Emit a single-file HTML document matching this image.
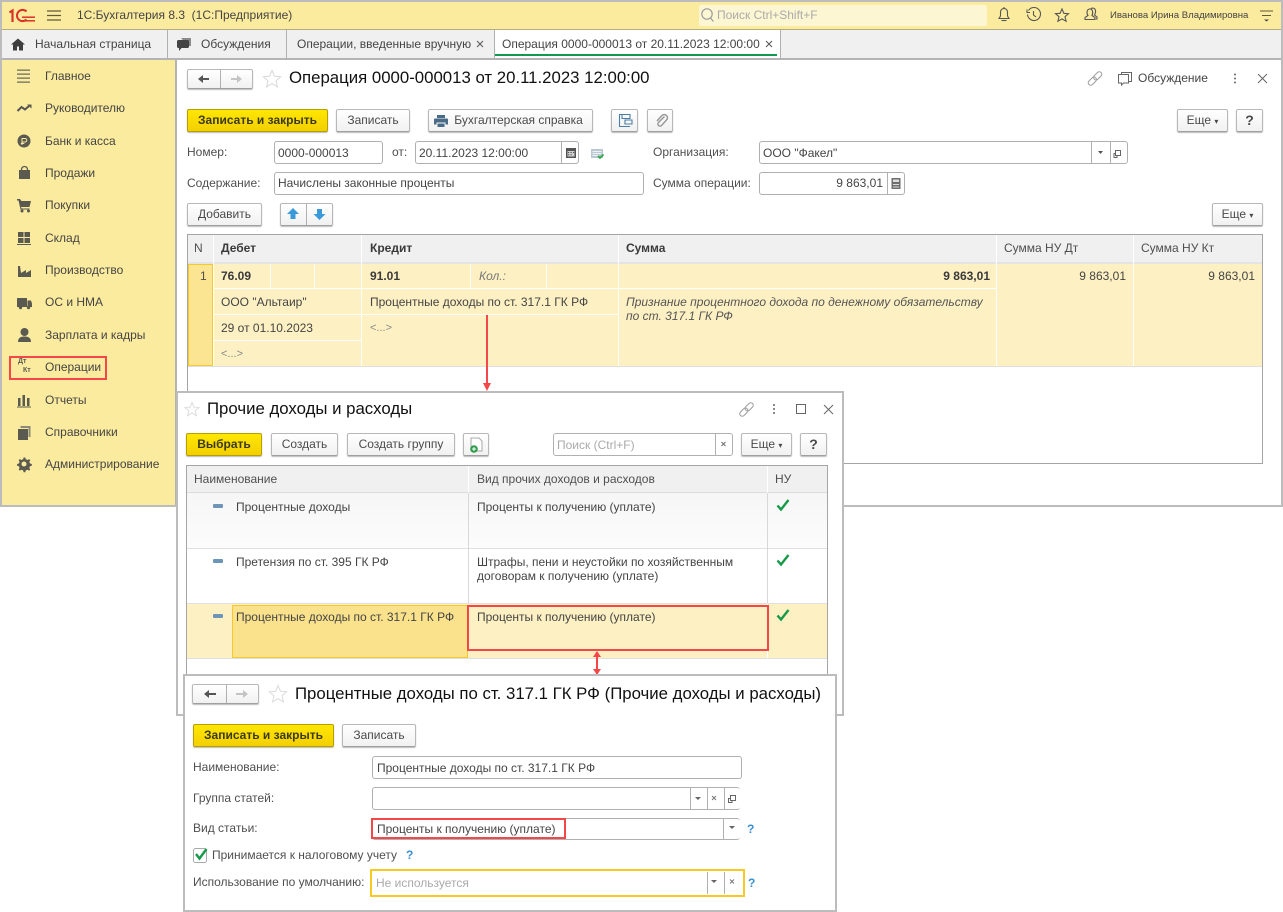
<!DOCTYPE html>
<html lang="ru"><head><meta charset="utf-8"><title>Операция</title>
<style>
html,body{margin:0;padding:0;background:#fff}
#p{position:relative;width:1283px;height:912px;overflow:hidden;background:#fff;font:12px/14px "Liberation Sans","Noto Sans CJK SC",sans-serif;color:#444}
#p div,#p span,#p svg{position:absolute;box-sizing:border-box}
#p span.s{position:static;font-size:8px}
.t{white-space:nowrap}
.l{color:#4f4f4f}
.r{text-align:right}
.h{font-size:16.8px;line-height:20px;color:#111;white-space:nowrap}
.b{border:1px solid #b8b8b8;border-bottom-color:#a0a0a0;border-radius:2px;background:linear-gradient(#fff,#f1f1f1);box-shadow:0 1px 1px #bbb;text-align:center;line-height:21px;color:#4a4a4a;white-space:nowrap}
.y{border:1px solid #b5a000;background:linear-gradient(#ffe700,#f3cf00);color:#3a3a1a;box-shadow:0 1px 1px #bbb;border-radius:2px;text-align:center;line-height:21px;white-space:nowrap;font-weight:bold}
.i{border:1px solid #b0b0b0;border-radius:3px;background:#fff}
.v{background:#b0b0b0;width:1px}
.w{background:#fff}
.bx{border:2px solid #bcbcbc;background:#fff}
.b2{font-weight:bold;color:#3a3a3a}
.it{font-style:italic;color:#555}
svg{overflow:visible}
</style></head><body><div id="p">

<!-- MAIN WINDOW -->
<div style="left:0;top:0;width:1283px;height:507px;border:2px solid #bcbcbc;background:#fff"></div>
<div style="left:2px;top:2px;width:1279px;height:27px;background:#fbeb9e"></div>
<div style="left:2px;top:29px;width:1279px;height:1px;background:#b5ad7e"></div>
<div style="left:2px;top:30px;width:1279px;height:28px;background:#f0f0f0"></div>
<div style="left:2px;top:58px;width:1279px;height:2px;background:#b4b4b4"></div>
<div style="left:494px;top:30px;width:286px;height:28px;background:#fff"></div>
<div style="left:495px;top:54px;width:282px;height:2px;background:#0f9a4f"></div>
<div class="v" style="left:167px;top:30px;height:28px"></div>
<div class="v" style="left:286px;top:30px;height:28px"></div>
<div class="v" style="left:494px;top:30px;height:28px"></div>
<div class="v" style="left:780px;top:30px;height:28px"></div>
<div style="left:2px;top:60px;width:173px;height:445px;background:#fbeb9e"></div>
<div style="left:175px;top:60px;width:2px;height:445px;background:#b4b4b4"></div>

<div style="left:699px;top:5px;width:288px;height:21px;background:#fdf6d2;border-radius:2px"></div>
<span class="t" style="left:77px;top:8px;color:#444;font-size:12px">1С:Бухгалтерия 8.3&nbsp; (1С:Предприятие)</span>
<span class="t" style="left:717px;top:8px;color:#aaa">Поиск Ctrl+Shift+F</span>
<span class="t" style="left:1110px;top:9px;font-size:9.6px;color:#444">Иванова Ирина Владимировна</span>

<span class="t" style="left:35px;top:37px">Начальная страница</span>
<span class="t" style="left:201px;top:37px">Обсуждения</span>
<span class="t" style="left:297px;top:37px">Операции, введенные вручную</span>
<span class="t" style="left:502px;top:37px">Операция 0000-000013 от 20.11.2023 12:00:00</span>

<!-- sidebar text -->
<span class="t" style="left:45px;top:69px">Главное</span>
<span class="t" style="left:45px;top:101px">Руководителю</span>
<span class="t" style="left:45px;top:134px">Банк и касса</span>
<span class="t" style="left:45px;top:166px">Продажи</span>
<span class="t" style="left:45px;top:198px">Покупки</span>
<span class="t" style="left:45px;top:231px">Склад</span>
<span class="t" style="left:45px;top:263px">Производство</span>
<span class="t" style="left:45px;top:295px">ОС и НМА</span>
<span class="t" style="left:45px;top:328px">Зарплата и кадры</span>
<span class="t" style="left:45px;top:360px">Операции</span>
<span class="t" style="left:45px;top:393px">Отчеты</span>
<span class="t" style="left:45px;top:425px">Справочники</span>
<span class="t" style="left:45px;top:457px">Администрирование</span>
<span class="t" style="left:18px;top:358px;font-size:7px;line-height:8px;font-weight:bold;color:#5a5a50">Дт</span>
<span class="t" style="left:23px;top:367px;font-size:7px;line-height:8px;font-weight:bold;color:#5a5a50">Кт</span>
<div style="left:9px;top:356px;width:98px;height:24px;border:2px solid #f4474a"></div>

<!-- form -->
<div class="b" style="left:187px;top:69px;width:66px;height:20px"></div>
<div class="v" style="left:220px;top:70px;height:18px"></div>
<span class="h" style="left:289px;top:68px">Операция 0000-000013 от 20.11.2023 12:00:00</span>
<span class="t" style="left:1138px;top:71px">Обсуждение</span>

<div class="y" style="left:187px;top:109px;width:141px;height:23px">Записать и закрыть</div>
<div class="b" style="left:336px;top:109px;width:74px;height:23px">Записать</div>
<div class="b" style="left:428px;top:109px;width:165px;height:23px;padding-left:16px">Бухгалтерская справка</div>
<div class="b" style="left:611px;top:109px;width:27px;height:23px"></div>
<div class="b" style="left:647px;top:109px;width:26px;height:23px"></div>
<div class="b" style="left:1177px;top:109px;width:51px;height:23px">Еще&nbsp;<span class="s">▾</span></div>
<div class="b" style="left:1236px;top:109px;width:27px;height:23px;font-weight:bold;font-size:14px">?</div>

<span class="t l" style="left:187px;top:145px">Номер:</span>
<div class="i" style="left:274px;top:141px;width:109px;height:23px"></div>
<span class="t" style="left:278px;top:146px">0000-000013</span>
<span class="t l" style="left:392px;top:145px">от:</span>
<div class="i" style="left:415px;top:141px;width:164px;height:23px"></div>
<div class="v" style="left:561px;top:141px;height:23px"></div>
<span class="t" style="left:419px;top:146px">20.11.2023 12:00:00</span>
<span class="t l" style="left:653px;top:145px">Организация:</span>
<div class="i" style="left:759px;top:141px;width:369px;height:23px"></div>
<div class="v" style="left:1091px;top:141px;height:23px"></div>
<div class="v" style="left:1110px;top:141px;height:23px"></div>
<span class="t" style="left:763px;top:146px">ООО "Факел"</span>

<span class="t l" style="left:187px;top:176px">Содержание:</span>
<div class="i" style="left:274px;top:172px;width:370px;height:23px"></div>
<span class="t" style="left:278px;top:176px">Начислены законные проценты</span>
<span class="t l" style="left:653px;top:176px">Сумма операции:</span>
<div class="i" style="left:759px;top:172px;width:146px;height:23px"></div>
<div class="v" style="left:887px;top:172px;height:23px"></div>
<span class="t r" style="left:783px;width:100px;top:176px">9 863,01</span>

<div class="b" style="left:187px;top:203px;width:75px;height:23px">Добавить</div>
<div class="b" style="left:280px;top:203px;width:53px;height:23px"></div>
<div class="v" style="left:306px;top:204px;height:21px"></div>
<div class="b" style="left:1212px;top:203px;width:51px;height:23px">Еще&nbsp;<span class="s">▾</span></div>

<!-- main table -->
<div style="left:187px;top:234px;width:1076px;height:230px;border:1px solid #a5a5a5;background:#fff"></div>
<div style="left:188px;top:235px;width:1074px;height:27px;background:#f0f0f0"></div>
<div style="left:188px;top:262px;width:1074px;height:2px;background:#e4e4e4"></div>
<div style="left:188px;top:264px;width:1074px;height:102px;background:#fdf0c3"></div>
<div style="left:188px;top:366px;width:1074px;height:1px;background:#e0e0e0"></div>
<div style="left:188px;top:264px;width:25px;height:102px;background:#fbe592;border:1px solid #f5c92e"></div>
<div class="w" style="left:213px;top:235px;width:1px;height:131px"></div>
<div class="w" style="left:361px;top:235px;width:1px;height:131px"></div>
<div class="w" style="left:618px;top:235px;width:1px;height:131px"></div>
<div class="w" style="left:996px;top:235px;width:1px;height:131px"></div>
<div class="w" style="left:1133px;top:235px;width:1px;height:131px"></div>
<div class="w" style="left:214px;top:288px;width:404px;height:1px"></div>
<div class="w" style="left:214px;top:314px;width:147px;height:1px"></div>
<div class="w" style="left:214px;top:340px;width:147px;height:1px"></div>
<div class="w" style="left:362px;top:314px;width:256px;height:1px"></div>
<div class="w" style="left:619px;top:288px;width:377px;height:1px"></div>
<div class="w" style="left:270px;top:264px;width:1px;height:24px"></div>
<div class="w" style="left:314px;top:264px;width:1px;height:24px"></div>
<div class="w" style="left:470px;top:264px;width:1px;height:24px"></div>
<div class="w" style="left:546px;top:264px;width:1px;height:24px"></div>

<span class="t l" style="left:194px;top:241px">N</span>
<span class="t b2" style="left:221px;top:241px">Дебет</span>
<span class="t b2" style="left:370px;top:241px">Кредит</span>
<span class="t b2" style="left:626px;top:241px">Сумма</span>
<span class="t l" style="left:1004px;top:241px">Сумма НУ Дт</span>
<span class="t l" style="left:1141px;top:241px">Сумма НУ Кт</span>

<span class="t l" style="left:200px;top:269px">1</span>
<span class="t b2" style="left:221px;top:269px">76.09</span>
<span class="t b2" style="left:370px;top:269px">91.01</span>
<span class="t it" style="left:479px;top:269px;color:#777">Кол.:</span>
<span class="t b2 r" style="left:840px;width:150px;top:269px">9 863,01</span>
<span class="t r" style="left:976px;width:150px;top:269px">9 863,01</span>
<span class="t r" style="left:1105px;width:150px;top:269px">9 863,01</span>
<span class="t" style="left:221px;top:295px">ООО "Альтаир"</span>
<span class="t" style="left:370px;top:295px">Процентные доходы по ст. 317.1 ГК РФ</span>
<span class="t" style="left:221px;top:321px">29 от 01.10.2023</span>
<span class="t" style="left:370px;top:321px;color:#888;font-size:11px">&lt;...&gt;</span>
<span class="t" style="left:221px;top:347px;color:#888;font-size:11px">&lt;...&gt;</span>
<span class="t it" style="left:626px;top:295px">Признание процентного дохода по денежному обязательству</span>
<span class="t it" style="left:626px;top:309px">по ст. 317.1 ГК РФ</span>

<!-- MAIN ICONS -->
<svg style="left:0;top:0" width="1283" height="507" viewBox="0 0 1283 507">
 <!-- logo -->
 <g fill="none" stroke="#d8312a">
  <path d="M9.500 12.500l3-2v11.500" stroke-width="2.200"/>
  <path d="M26.500 11.500a5.600 5.600 0 1 0 0 8" stroke-width="2"/>
  <path d="M22 17.200h13" stroke-width="1.500"/><path d="M22 20.800h13" stroke-width="1.500"/>
 </g>
 <path d="M47 11h14M47 15.500h14M47 20h14" stroke="#5f5a3c" stroke-width="1.200"/>
 <!-- search -->
 <circle cx="707" cy="14" r="5.200" fill="none" stroke="#9c9c9c" stroke-width="1.200"/><path d="M710.500 18l3 3.500" stroke="#9c9c9c" stroke-width="1.200"/>
 <g fill="none" stroke="#555" stroke-width="1.100">
  <!-- bell -->
  <path d="M999 18.500h10l-1.500-2.500v-4a3.500 3.500 0 0 0-7 0v4z"/><path d="M1001.500 20.500h5"/><path d="M1004 7v1.500"/>
  <!-- history -->
  <path d="M1028.500 10.500a6.500 6.500 0 1 1-1 4"/><path d="M1027 9.500v3h3"/><path d="M1033.500 11v4l2.500 2"/>
  <!-- star -->
  <path d="M1062 9l1.900 4.300 4.600.4-3.500 3 1.100 4.600-4.100-2.400-4.100 2.400 1.100-4.600-3.500-3 4.600-.4z"/>
  <!-- users -->
  <path d="M1087 19.500h-2v-2l3-2c-1.500-2-1.500-6 1.500-6.500s4 3.500 2.500 6.500l3 2v2z"/><path d="M1091 8.500c3-1.500 5 1 4.500 3.500s-1 3-1 3l2.500 2v2h-1"/>
 </g>
 <path d="M1260 11h13M1262 15.500h9" stroke="#5f5a3c" stroke-width="1.100"/><path d="M1264 19.500h5l-2.500 2z" fill="#444"/>

 <!-- home, chat -->
 <path d="M18 38.500l-7 6h2v6h4v-4h2v4h4v-6h2z" fill="#3e3e3e"/>
 <path d="M181 38h10v8h-3z" fill="#8a8a8a"/>
 <path d="M178.500 40h9a1.500 1.500 0 0 1 1.500 1.500v5a1.500 1.500 0 0 1-1.500 1.500h-6l-2.500 3v-3h-.5a1.500 1.500 0 0 1-1.500-1.500v-5a1.500 1.500 0 0 1 1.500-1.500z" fill="#444"/>
 <path d="M477 41l6 6M483 41l-6 6M766 41l6 6M772 41l-6 6" stroke="#555" stroke-width="1"/>

 <!-- sidebar icons -->
 <g fill="#5a5a50">
  <path d="M17 70h13v1.200H17zM17 74h13v1.200H17zM17 78h13v1.200H17zM17 82h13v1.200H17z" fill="#6a6a5c" transform="translate(0,-.5)"/>
  <path d="M17.500 111l4-4 3.500 2.500 4-3.500" fill="none" stroke="#555" stroke-width="2"/><path d="M27 104.500h4.500v4z"/>
  <circle cx="24" cy="141" r="6.500"/>
  <path d="M19 170h11v9H19z"/><path d="M21.500 171v-1.500a3 3 0 0 1 6 0v1.500" fill="none" stroke="#5a5a50" stroke-width="1.300"/>
  <path d="M17 199h3l1.500 2H31l-1.500 6H21l.5 1.500h8v1H20.500L18.500 200.500H17z"/><circle cx="22" cy="211" r="1.500"/><circle cx="28.500" cy="211" r="1.500"/>
  <path d="M18 232h5.500v5H18zM24.500 232H30v5h-5.500zM18 238h5.500v5H18zM24.500 238H30v5h-5.500zM17 244h14v1H17z"/>
  <path d="M18 277h13v-7l-5 3v-3l-5 3-1-7h-2z"/>
  <path d="M17 298h10v9H17zM27.500 300.500h3.500l1 3v3.500h-4.500z"/><circle cx="20.500" cy="307.500" r="1.700"/><circle cx="28.500" cy="307.500" r="1.700"/>
  <circle cx="24.500" cy="332" r="4"/><path d="M18 342c0-4.500 3-5.500 6.500-5.500s6.500 1 6.500 5.500z"/>
  <path d="M18 398h2.500v8H18zM22.500 395h2.500v11h-2.500zM27 398h2.500v8H27zM17 406.500h14v1H17z"/>
  <path d="M18 429h10v11H18z"/><path d="M20.500 426h10v11h-2v-9h-8z" fill="#8b8b78"/>
  <path d="M24 457.500l1.300 0 .5 1.800 1.700.7 1.600-.9 1.100 1.100-.9 1.600.7 1.700 1.800.5v1.700l-1.800.5-.7 1.700.9 1.600-1.100 1.100-1.600-.9-1.700.7-.5 1.800h-1.700l-.5-1.800-1.700-.7-1.600.9-1.100-1.100.9-1.600-.7-1.700-1.800-.5v-1.700l1.800-.5.7-1.700-.9-1.600 1.100-1.100 1.600.9 1.700-.7.5-1.800z"/>
 </g>
 <circle cx="24" cy="464" r="2.500" fill="#fbeb9e"/>
 <path d="M22 138.500h3a1.500 1.500 0 0 1 0 3.500h-3M22 138v7M20.800 143.500h3.500" fill="none" stroke="#fbeb9e" stroke-width="1"/>

 <!-- nav arrows -->
 <path d="M198 79l5-4v3h6v2h-6v3z" fill="#555"/>
 <path d="M242 79l-5-4v3h-6v2h6v3z" fill="#c4c4c4"/>
 <path d="M272 70.500l2.500 5.800 6.200.5-4.700 4 1.500 6.100-5.500-3.300-5.500 3.300 1.500-6.100-4.700-4 6.200-.5z" fill="#fff" stroke="#d9d9d9"/>
 <!-- link -->
 <g fill="none" stroke="#a0a0a0" stroke-width="1.100" transform="rotate(-45 1095 78.500)">
  <rect x="1086.500" y="76" width="9.500" height="5" rx="2.500"/><rect x="1094" y="76" width="9.500" height="5" rx="2.500"/>
 </g>
 <!-- chat outline -->
 <g stroke="#666" stroke-width="1">
  <path d="M1121.500 74.500v-2h10v9h-3" fill="none"/>
  <path d="M1118.500 74.500h10v8.500h-5l-2 2v-2h-3z" fill="#fff"/>
 </g>
 <circle cx="1235" cy="74.500" r="1" fill="#666"/><circle cx="1235" cy="78.500" r="1" fill="#666"/><circle cx="1235" cy="82.500" r="1" fill="#666"/>
 <path d="M1258 74l9 9M1267 74l-9 9" stroke="#666" stroke-width="1"/>

 <!-- printer -->
 <path d="M437 115h8v3h-8zM435 118.500h12a1 1 0 0 1 1 1v5h-2.500v-2h-9v2H434v-5a1 1 0 0 1 1-1zM437.500 123.500h7v3.500h-7z" fill="#4a6b88"/>
 <!-- structure -->
 <g fill="none" stroke="#4d7ea5" stroke-width="1.100"><path d="M622 114.500h8v4h-8zM625 120h7v4h-7z"/><path d="M622.500 114.500h-3v12h3M622 126.500h8"/></g>
 <!-- clip -->
 <path d="M664.500 116.500l-6 6a2 2 0 0 0 3 3l5-5.500a3 3 0 0 0-4.500-4.500l-5 5.500" fill="none" stroke="#999" stroke-width="1.500"/>
 <!-- calendar -->
 <path d="M566 148h10v10h-10z" fill="#555"/><path d="M567.500 151h7v5.500h-7z" fill="#cfcfcf"/><path d="M568 152.500h1.200M570.500 152.500h1.200M573 152.500h1.200M568 154.800h1.200M570.500 154.800h1.200" stroke="#555"/>
 <!-- posted doc -->
 <path d="M591 149h12v9h-12z" fill="#b9c8d2"/><path d="M592.500 151.500h9M592.500 153.500h9M592.500 155.500h6" stroke="#fff" stroke-width=".8"/><path d="M598 156l2 2 3.500-3.500" fill="none" stroke="#2fa84a" stroke-width="1.800"/>
 <!-- dropdown etc -->
 <path d="M1098 151h5l-2.500 3z" fill="#555"/>
 <path d="M1115.500 150.500h5v5h-5zM1117 155.500v2h-3v-4h1.500" fill="none" stroke="#666" stroke-width="1"/>
 <!-- calc -->
 <path d="M891.500 178h9v11h-9z" fill="#6d6d6d"/><path d="M893 179.500h6v2.500h-6z" fill="#ddd"/><path d="M893 184h6v1H893zM893 186.500h6v1H893z" fill="#ddd"/>
 <!-- arrows -->
 <path d="M293 208l-6 6h3.500v5h5v-5h3.500z" fill="#3a9ad9"/>
 <path d="M317 209h5v5h3.500l-6 6-6-6h3.500z" fill="#3a9ad9"/>
</svg>

<!-- red arrow 1 -->
<svg style="left:0;top:0" width="1283" height="912" viewBox="0 0 1283 912"><path d="M487 315v70" stroke="#f4474a" stroke-width="2"/><path d="M483 383h8l-4 8z" fill="#f4474a"/></svg>

<!-- DIALOG 2 -->
<div class="bx" style="left:176px;top:391px;width:668px;height:325px"></div>
<span class="h" style="left:207px;top:399px">Прочие доходы и расходы</span>
<div class="y" style="left:186px;top:433px;width:76px;height:23px">Выбрать</div>
<div class="b" style="left:271px;top:433px;width:67px;height:23px">Создать</div>
<div class="b" style="left:347px;top:433px;width:108px;height:23px">Создать группу</div>
<div class="b" style="left:463px;top:433px;width:26px;height:23px"></div>
<div class="i" style="left:553px;top:433px;width:180px;height:23px"></div>
<div class="v" style="left:715px;top:433px;height:23px"></div>
<span class="t" style="left:557px;top:438px;color:#aaa">Поиск (Ctrl+F)</span>
<div class="b" style="left:741px;top:433px;width:51px;height:23px">Еще&nbsp;<span class="s">▾</span></div>
<div class="b" style="left:800px;top:433px;width:27px;height:23px;font-weight:bold;font-size:14px">?</div>

<div style="left:186px;top:465px;width:642px;height:250px;border:1px solid #a5a5a5;border-bottom:0;background:#fff"></div>
<div style="left:187px;top:466px;width:640px;height:27px;background:#f0f0f0"></div>
<div style="left:187px;top:493px;width:640px;height:55px;background:linear-gradient(#f6f6f6,#fcfcfc)"></div>
<div style="left:187px;top:492px;width:640px;height:1px;background:#dcdcdc"></div>
<div style="left:187px;top:548px;width:640px;height:1px;background:#e0e0e0"></div>
<div style="left:187px;top:603px;width:640px;height:1px;background:#e0e0e0"></div>
<div style="left:187px;top:604px;width:640px;height:54px;background:#fdf0c3"></div>
<div style="left:187px;top:658px;width:640px;height:1px;background:#e0e0e0"></div>
<div style="left:468px;top:466px;width:1px;height:27px;background:#fff"></div>
<div style="left:767px;top:466px;width:1px;height:27px;background:#fff"></div>
<div style="left:468px;top:493px;width:1px;height:110px;background:#d8d8d8"></div>
<div style="left:767px;top:493px;width:1px;height:110px;background:#d8d8d8"></div>
<div style="left:767px;top:604px;width:1px;height:54px;background:#fff"></div>
<div style="left:232px;top:605px;width:236px;height:53px;background:#fae18b;border:1px solid #f5c92e"></div>
<div style="left:467px;top:605px;width:302px;height:46px;border:2px solid #f4474a;background:#fdf0c3"></div>

<span class="t l" style="left:194px;top:472px">Наименование</span>
<span class="t l" style="left:477px;top:472px">Вид прочих доходов и расходов</span>
<span class="t l" style="left:775px;top:472px">НУ</span>
<span class="t" style="left:236px;top:500px">Процентные доходы</span>
<span class="t" style="left:477px;top:500px">Проценты к получению (уплате)</span>
<span class="t" style="left:236px;top:555px">Претензия по ст. 395 ГК РФ</span>
<span class="t" style="left:477px;top:555px">Штрафы, пени и неустойки по хозяйственным</span>
<span class="t" style="left:477px;top:569px">договорам к получению (уплате)</span>
<span class="t" style="left:236px;top:610px">Процентные доходы по ст. 317.1 ГК РФ</span>
<span class="t" style="left:477px;top:610px">Проценты к получению (уплате)</span>

<svg style="left:0;top:0" width="1283" height="912" viewBox="0 0 1283 912">
 <path d="M192 402.500l2 4.700 5 .4-3.800 3.200 1.200 4.900-4.400-2.700-4.400 2.700 1.200-4.900-3.800-3.200 5-.4z" fill="#fff" stroke="#dcdcdc"/>
 <g fill="none" stroke="#a0a0a0" stroke-width="1.100" transform="rotate(-45 746.500 409.500)">
  <rect x="738" y="407" width="9.500" height="5" rx="2.500"/><rect x="745.500" y="407" width="9.500" height="5" rx="2.500"/>
 </g>
 <circle cx="774" cy="405" r="1" fill="#666"/><circle cx="774" cy="409" r="1" fill="#666"/><circle cx="774" cy="413" r="1" fill="#666"/>
 <rect x="796.500" y="404.500" width="9" height="9" fill="none" stroke="#666"/>
 <path d="M824 405l9 9M833 405l-9 9" stroke="#666"/>
 <path d="M471 438h8l3 3v10h-11z" fill="#fff" stroke="#aaa"/><circle cx="474" cy="449" r="3.800" fill="#2e9c4c"/><path d="M472 449h4M474 447v4" stroke="#fff"/>
 <path d="M721.500 442l4 4M725.500 442l-4 4" stroke="#777" stroke-width="1.200"/>
 <g fill="#6e95b8"><rect x="213" y="504" width="10" height="4" rx="1"/><rect x="213" y="559" width="10" height="4" rx="1"/><rect x="213" y="614" width="10" height="4" rx="1"/></g>
 <g fill="none" stroke="#169a49" stroke-width="2.400"><path d="M777.500 505.500l3.500 4 7.500-9.500"/><path d="M777.500 560.500l3.500 4 7.500-9.500"/><path d="M777.500 615.500l3.500 4 7.500-9.500"/></g>
 <path d="M597 652v22" stroke="#f4474a" stroke-width="2"/><path d="M593 657l4-6 4 6zM593 669l4 6 4-6z" fill="#f4474a"/>
</svg>

<!-- DIALOG 3 -->
<div class="bx" style="left:183px;top:674px;width:654px;height:238px"></div>
<div class="b" style="left:192px;top:684px;width:67px;height:20px"></div>
<div class="v" style="left:226px;top:685px;height:18px"></div>
<span class="h" style="left:295px;top:684px">Процентные доходы по ст. 317.1 ГК РФ (Прочие доходы и расходы)</span>
<div class="y" style="left:193px;top:724px;width:141px;height:23px">Записать и закрыть</div>
<div class="b" style="left:342px;top:724px;width:74px;height:23px">Записать</div>

<span class="t l" style="left:193px;top:760px">Наименование:</span>
<div class="i" style="left:372px;top:756px;width:370px;height:23px"></div>
<span class="t" style="left:377px;top:761px">Процентные доходы по ст. 317.1 ГК РФ</span>
<span class="t l" style="left:193px;top:791px">Группа статей:</span>
<div class="i" style="left:372px;top:787px;width:368px;height:23px;border-right:0"></div>
<div class="v" style="left:690px;top:787px;height:23px"></div>
<div class="v" style="left:707px;top:787px;height:23px"></div>
<div class="v" style="left:724px;top:787px;height:23px"></div>
<span class="t l" style="left:193px;top:821px">Вид статьи:</span>
<div class="i" style="left:372px;top:818px;width:368px;height:22px;border-right:0"></div>
<div class="v" style="left:723px;top:818px;height:22px"></div>
<div style="left:371px;top:818px;width:195px;height:21px;border:2px solid #f4474a"></div>
<span class="t" style="left:377px;top:822px">Проценты к получению (уплате)</span>
<span class="t l" style="left:212px;top:848px">Принимается к налоговому учету</span>
<span class="t" style="left:406px;top:848px;color:#3a8fd0;font-weight:bold">?</span>
<span class="t" style="left:747px;top:822px;color:#3a8fd0;font-weight:bold">?</span>
<span class="t l" style="left:193px;top:875px">Использование по умолчанию:</span>
<div style="left:370px;top:869px;width:375px;height:28px;border:2px solid #f7c922;background:#fff"></div>
<div class="v" style="left:707px;top:872px;height:22px"></div>
<div class="v" style="left:724px;top:872px;height:22px"></div>
<span class="t" style="left:376px;top:876px;color:#aaa">Не используется</span>
<span class="t" style="left:748px;top:876px;color:#3a8fd0;font-weight:bold">?</span>

<svg style="left:0;top:0" width="1283" height="912" viewBox="0 0 1283 912">
 <path d="M204 694l5-4v3h7v2h-7v3z" fill="#555"/>
 <path d="M248 694l-5-4v3h-7v2h7v3z" fill="#c4c4c4"/>
 <path d="M278 685.500l2.500 5.800 6.200.5-4.700 4 1.500 6.100-5.500-3.300-5.500 3.300 1.500-6.100-4.700-4 6.200-.5z" fill="#fff" stroke="#dcdcdc"/>
 <path d="M695 797h6l-3 3zM729 826h6l-3 3zM711 880h6l-3 3z" fill="#666"/>
 <path d="M712 796l4 4M716 796l-4 4M730 879.500l4 4M734 879.500l-4 4" stroke="#777" stroke-width="1"/>
 <path d="M730.500 795.500h5v5h-5zM732 800.500v2h-3.500v-4h2" fill="none" stroke="#666"/>
 <rect x="193.500" y="848.500" width="13" height="14" rx="2" fill="#fff" stroke="#aaa"/>
 <path d="M196 854l3.500 4.500 7-9.500" fill="none" stroke="#169a49" stroke-width="2.400"/>
</svg>
</div></body></html>
